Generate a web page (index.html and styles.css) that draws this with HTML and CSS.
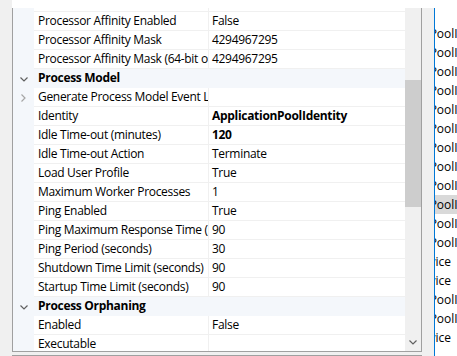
FILE: index.html
```html
<!DOCTYPE html>
<html lang="en">
<head>
    <meta charset="UTF-8">
    <title>Application Pool Advanced Settings</title>
    <link rel="stylesheet" href="styles.css">
</head>
<body>

<div class="screen">
    <div class="edge"></div>

    <div class="main">
        <div class="grid">
            <div class="rows">
                <div class="row partial"><span class="gut"></span><span class="name"></span><span class="val"></span></div>
                <div class="row"><span class="gut"></span><span class="name">Processor Affinity Enabled</span><span class="val">False</span></div>
                <div class="row"><span class="gut"></span><span class="name">Processor Affinity Mask</span><span class="val">4294967295</span></div>
                <div class="row"><span class="gut"></span><span class="name">Processor Affinity Mask (64-bit option)</span><span class="val">4294967295</span></div>

                <div class="row cat">
                    <span class="gut">
                        <svg width="8" height="5" viewBox="0 0 8 5"><path d="M0.5 0.5 L4 4 L7.5 0.5" fill="none" stroke="#606060" stroke-width="1.2"/></svg>
                    </span>
                    <span class="name">Process Model</span>
                </div>
                <div class="row">
                    <span class="gut">
                        <svg width="5" height="8" viewBox="0 0 5 8"><path d="M0.5 0.5 L4 4 L0.5 7.5" fill="none" stroke="#a6a6a6" stroke-width="1.2"/></svg>
                    </span>
                    <span class="name">Generate Process Model Event Log Entry</span><span class="val"></span>
                </div>
                <div class="row"><span class="gut"></span><span class="name">Identity</span><span class="val bold">ApplicationPoolIdentity</span></div>
                <div class="row"><span class="gut"></span><span class="name">Idle Time-out (minutes)</span><span class="val bold">120</span></div>
                <div class="row"><span class="gut"></span><span class="name">Idle Time-out Action</span><span class="val">Terminate</span></div>
                <div class="row"><span class="gut"></span><span class="name">Load User Profile</span><span class="val">True</span></div>
                <div class="row"><span class="gut"></span><span class="name">Maximum Worker Processes</span><span class="val">1</span></div>
                <div class="row"><span class="gut"></span><span class="name">Ping Enabled</span><span class="val">True</span></div>
                <div class="row"><span class="gut"></span><span class="name">Ping Maximum Response Time (seconds)</span><span class="val">90</span></div>
                <div class="row"><span class="gut"></span><span class="name">Ping Period (seconds)</span><span class="val">30</span></div>
                <div class="row"><span class="gut"></span><span class="name">Shutdown Time Limit (seconds)</span><span class="val">90</span></div>
                <div class="row"><span class="gut"></span><span class="name">Startup Time Limit (seconds)</span><span class="val">90</span></div>

                <div class="row cat">
                    <span class="gut">
                        <svg width="8" height="5" viewBox="0 0 8 5"><path d="M0.5 0.5 L4 4 L7.5 0.5" fill="none" stroke="#606060" stroke-width="1.2"/></svg>
                    </span>
                    <span class="name">Process Orphaning</span>
                </div>
                <div class="row"><span class="gut"></span><span class="name">Enabled</span><span class="val">False</span></div>
                <div class="row"><span class="gut"></span><span class="name">Executable</span><span class="val"></span></div>
            </div>

            <div class="scrollbar">
                <div class="thumb"></div>
                <div class="arrow">
                    <svg width="8" height="5" viewBox="0 0 8 5"><path d="M0.5 0.5 L4 4 L7.5 0.5" fill="none" stroke="#606060" stroke-width="1.2"/></svg>
                </div>
            </div>
        </div>
        <div class="under"></div>
    </div>

    <div class="gap"></div>

    <!-- list of pools behind the dialog, only its left edge shows -->
    <div class="list">
        <div class="item pool"><span>ApplicationPoolIdentity</span></div>
        <div class="item pool"><span>ApplicationPoolIdentity</span></div>
        <div class="item pool"><span>ApplicationPoolIdentity</span></div>
        <div class="item pool"><span>ApplicationPoolIdentity</span></div>
        <div class="item pool"><span>ApplicationPoolIdentity</span></div>
        <div class="item pool"><span>ApplicationPoolIdentity</span></div>
        <div class="item pool"><span>ApplicationPoolIdentity</span></div>
        <div class="item pool"><span>ApplicationPoolIdentity</span></div>
        <div class="item pool"><span>ApplicationPoolIdentity</span></div>
        <div class="item pool selected"><span>ApplicationPoolIdentity</span></div>
        <div class="item pool"><span>ApplicationPoolIdentity</span></div>
        <div class="item pool"><span>ApplicationPoolIdentity</span></div>
        <div class="item svc"><span>NetworkService</span></div>
        <div class="item svc"><span>NetworkService</span></div>
        <div class="item pool"><span>ApplicationPoolIdentity</span></div>
        <div class="item pool"><span>ApplicationPoolIdentity</span></div>
        <div class="item svc"><span>NetworkService</span></div>
    </div>
</div>

</body>
</html>
```

FILE: styles.css
```css
body {
    margin: 0;
    background: #fff;
    font-family: "Open Sans", "Liberation Sans", sans-serif;
    font-size: 12px;
    letter-spacing: -0.3px;
    color: #000;
}
.screen {
    display: flex;
    width: 457px;
    height: 356px;
    overflow: hidden;
}
.edge {
    width: 12px;
    background: #f0f0f0;
}
.main {
    width: 410px;
    padding-top: 8px;
}
.grid {
    display: flex;
    height: 343px;
    border: 1px solid #a0a0a0;
    border-top: none;
    background: #fff;
}
.rows {
    width: 392px;
    overflow: hidden;
}
.row {
    display: flex;
    flex-shrink: 0;
    height: 19px;
    white-space: nowrap;
}
.row.partial {
    height: 4px;
}
.gut {
    flex: 0 0 21px;
    display: flex;
    align-items: center;
    justify-content: center;
    background: #f4f7fb;
}
.name,
.val {
    box-sizing: border-box;
    height: 19px;
    line-height: 18px;
    overflow: hidden;
    border-bottom: 1px solid #f0f0f0;
}
.name {
    flex: 0 0 174px;
    padding-left: 4px;
}
.val {
    flex: 0 0 197px;
    padding-left: 3px;
    border-left: 1px solid #f0f0f0;
}
.partial .name,
.partial .val {
    height: 4px;
}
.row.cat {
    background: #f4f7fb;
}
.cat .gut {
    padding-top: 1px;
}
.cat .name {
    flex: 1;
    font-weight: bold;
    border-bottom-color: #f4f7fb;
}
.bold {
    font-weight: bold;
}
.scrollbar {
    position: relative;
    width: 16px;
    background: #f0f0f0;
}
.thumb {
    position: absolute;
    top: 72px;
    left: 0;
    width: 16px;
    height: 127px;
    background: #cdcdcd;
}
.arrow {
    position: absolute;
    bottom: 6px;
    left: 4px;
    line-height: 0;
}
.under {
    height: 3px;
    background: #f0f0f0;
    border-bottom: 1px solid #a0a0a0;
}
.gap {
    width: 12px;
    margin-top: 8px;
    background: #f0f0f0;
}
.list {
    width: 22px;
    margin-top: 8px;
    padding-top: 16px;
    border-left: 1px solid #0078d7;
    overflow: hidden;
    letter-spacing: 0;
}
.item {
    height: 19px;
    line-height: 19px;
    white-space: nowrap;
    overflow: hidden;
}
.item.selected {
    background: #d9d9d9;
}
.pool span {
    margin-left: -68px;
}
.svc span {
    display: block;
    text-align: right;
    padding-right: 6px;
    margin-left: -80px;
}
```
